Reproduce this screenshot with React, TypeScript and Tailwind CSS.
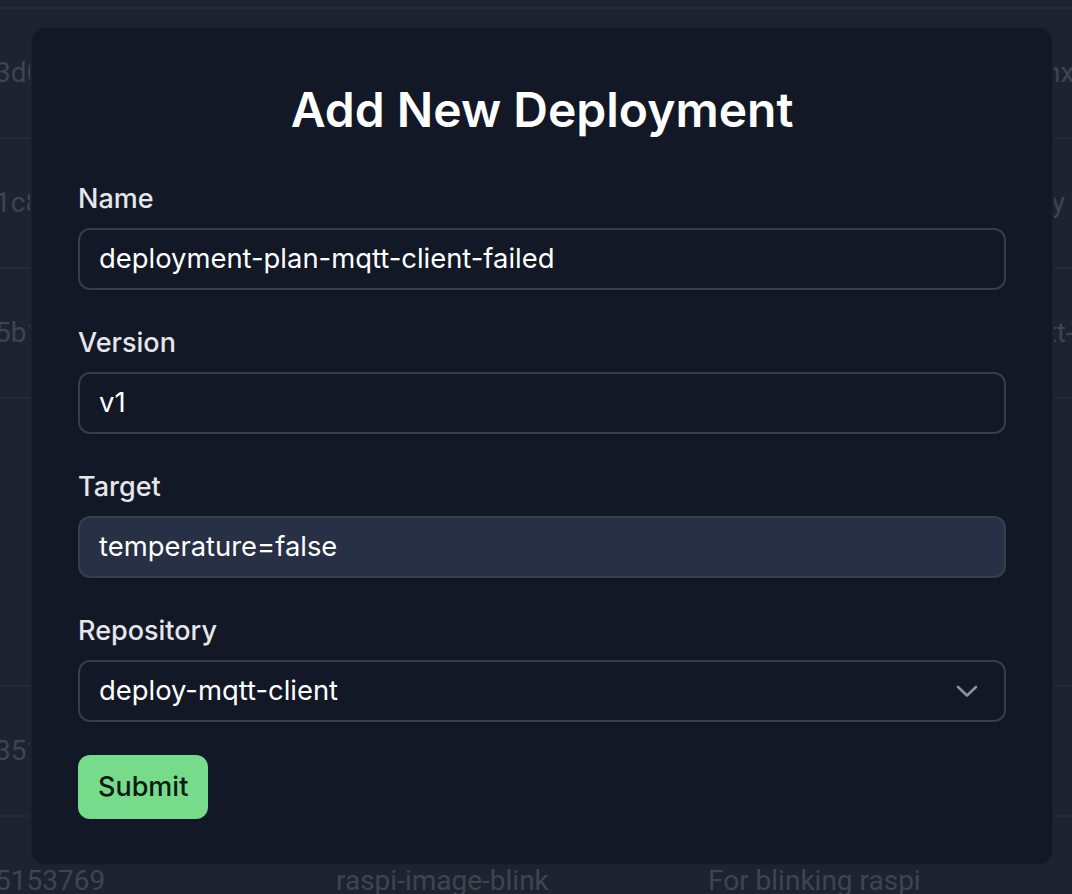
import React from 'react'

const rows = [
  { h: 'h-[130px]', a: '3d0e7a1f', b: 'nginx-demo', c: 'Demo deployment', d: 'nginx' },
  { h: 'h-[130px]', a: '1c82b7d4', b: 'mqtt-client', c: 'MQTT test client', d: 'daily' },
  { h: 'h-[130px]', a: '5b1f9e20', b: 'deploy-mqtt-client', c: 'Client for sensors', d: 'mqtt-client' },
  { h: 'h-[288px]', a: '', b: '', c: '', d: '' },
  { h: 'h-[130px]', a: '3517a92c', b: 'temperature-reader', c: 'Reads temperature', d: '' },
  { h: 'h-[130px]', a: '5153769', b: 'raspi-image-blink', c: 'For blinking raspi', d: '' },
]

const Field = ({ label, value, filled }: { label: string; value: string; filled?: boolean }) => (
  <div className="flex flex-col">
    <label className="text-[27px] leading-[40px] font-medium text-[#e4e6eb]">{label}</label>
    <div
      className={`mt-[9px] h-[62px] flex items-center px-[19px] rounded-[12px] border-2 border-[#363d4c] text-[27.4px] text-white ${filled ? 'bg-[#283046]' : 'bg-[#121826]'}`}
    >
      {value}
    </div>
  </div>
)

export default function App() {
  return (
    <div className="relative w-[1072px] h-[894px] overflow-hidden bg-[#1e2330]" style={{ fontFamily: 'Inter, "Noto Sans", sans-serif' }}>
      {/* dimmed table behind the dialog */}
      <div className="pt-[7px] text-[28px] text-[#3e4452]" style={{ fontFamily: 'Roboto, "Liberation Sans", sans-serif' }}>
        {rows.map((r, i) => (
          <div key={i} className={`${r.h} flex items-center whitespace-nowrap border-t-2 border-[#252a37] ml-[-5px]`}>
            <div className="w-[341px] shrink-0">{r.a}</div>
            <div className="w-[372px] shrink-0">{r.b}</div>
            <div className="w-[299px] shrink-0">{r.c}</div>
            <div className="shrink-0">{r.d}</div>
          </div>
        ))}
      </div>

      {/* dialog */}
      <div className="absolute left-[30px] top-[26px] w-[1024px] h-[840px] rounded-[16px] border-2 border-[#1c2130] bg-[#121826] px-[46px] pt-[50px]">
        <h2 className="text-center text-[48px] leading-[64px] font-semibold text-white">Add New Deployment</h2>
        <div className="mt-[37px] flex flex-col gap-[33px]">
          <Field label="Name" value="deployment-plan-mqtt-client-failed" />
          <Field label="Version" value="v1" />
          <Field label="Target" value="temperature=false" filled />
          <div className="flex flex-col">
            <label className="text-[27px] leading-[40px] font-medium text-[#e4e6eb]">Repository</label>
            <div className="mt-[9px] h-[62px] flex items-center justify-between pl-[19px] pr-[26px] rounded-[12px] border-2 border-[#363d4c] text-[27.4px] text-white">
              <span>deploy-mqtt-client</span>
              <svg width="22" height="13" viewBox="0 0 22 13" fill="none">
                <polyline points="2,2 11,10.5 20,2" stroke="#8a909d" strokeWidth="2.6" strokeLinecap="round" strokeLinejoin="round" />
              </svg>
            </div>
          </div>
        </div>
        <button className="mt-[33px] h-[64px] px-[20px] rounded-[12px] bg-[#76db8b] text-[27px] font-medium text-[#0d1a12]">
          Submit
        </button>
      </div>
    </div>
  )
}
